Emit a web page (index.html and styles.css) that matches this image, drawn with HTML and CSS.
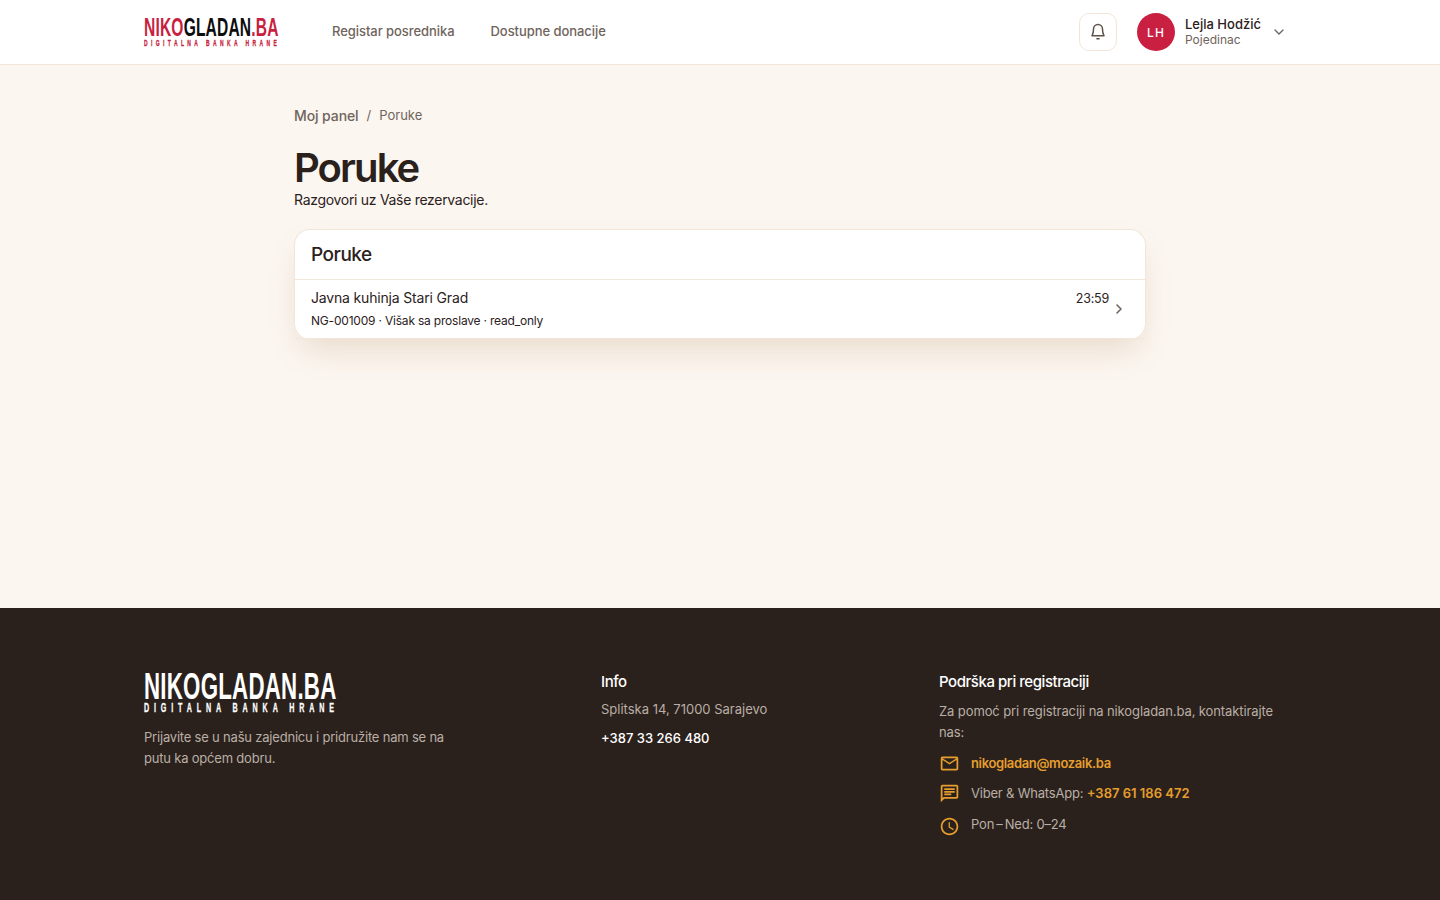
FILE: index.html
```html
<!DOCTYPE html>
<html lang="bs">
<head>
    <meta charset="UTF-8">
    <meta name="viewport" content="width=device-width, initial-scale=1.0">
    <title>Poruke</title>
    <link rel="stylesheet" href="styles.css">
</head>
<body>
    <header class="topbar">
        <div class="topbar-inner">
            <a class="logo logo-small" href="#">
                <span class="logo-name"><span class="logo-red">NIKO</span><span class="logo-dark">GLADAN</span><span class="logo-red">.BA</span></span>
                <span class="logo-sub logo-red">DIGITALNA BANKA HRANE</span>
            </a>
            <nav class="topnav">
                <a href="#">Registar posrednika</a>
                <a href="#">Dostupne donacije</a>
            </nav>
            <div class="topbar-right">
                <button class="bell-btn">
                    <svg width="18" height="18" viewBox="0 0 24 24" fill="none" stroke="currentColor" stroke-width="2" stroke-linecap="round" stroke-linejoin="round"><path d="M6 8a6 6 0 0 1 12 0c0 7 2 8 2 9H4c0-1 2-2 2-9"/><path d="M10.5 21h3"/></svg>
                </button>
                <div class="user">
                    <span class="avatar">LH</span>
                    <span class="user-text">
                        <span class="user-name">Lejla Hodžić</span>
                        <span class="user-role">Pojedinac</span>
                    </span>
                    <svg class="user-chevron" width="16" height="16" viewBox="0 0 24 24" fill="none" stroke="currentColor" stroke-width="2" stroke-linecap="round" stroke-linejoin="round"><path d="m6 9 6 6 6-6"/></svg>
                </div>
            </div>
        </div>
    </header>

    <main class="page">
        <div class="crumbs">
            <a href="#">Moj panel</a>
            <span class="crumb-sep">/</span>
            <span class="crumb-current">Poruke</span>
        </div>
        <h1 class="page-title">Poruke</h1>
        <p class="page-sub">Razgovori uz Vaše rezervacije.</p>

        <section class="card">
            <h2 class="card-title">Poruke</h2>
            <a class="thread" href="#">
                <div class="thread-main">
                    <div class="thread-name">Javna kuhinja Stari Grad</div>
                    <div class="thread-meta">NG-001009 · Višak sa proslave · read_only</div>
                </div>
                <span class="thread-time">23:59</span>
                <svg class="thread-arrow" width="16" height="16" viewBox="0 0 24 24" fill="none" stroke="currentColor" stroke-width="2.4" stroke-linecap="round" stroke-linejoin="round"><path d="m9 6 6 6-6 6"/></svg>
            </a>
        </section>
    </main>

    <footer class="footer">
        <div class="footer-inner">
            <div class="footer-col">
                <div class="logo logo-big">
                    <span class="logo-name">NIKOGLADAN.BA</span>
                    <span class="logo-sub">DIGITALNA BANKA HRANE</span>
                </div>
                <p class="footer-about">Prijavite se u našu zajednicu i pridružite nam se na putu ka općem dobru.</p>
            </div>
            <div class="footer-col">
                <h3 class="footer-head">Info</h3>
                <p class="footer-line">Splitska 14, 71000 Sarajevo</p>
                <a class="footer-phone" href="#">+387 33 266 480</a>
            </div>
            <div class="footer-col">
                <h3 class="footer-head">Podrška pri registraciji</h3>
                <p class="footer-help">Za pomoć pri registraciji na nikogladan.ba, kontaktirajte nas:</p>
                <div class="contact-row">
                    <svg class="contact-icon" viewBox="0 0 24 24" fill="currentColor"><path d="M20 4H4c-1.1 0-1.99.9-1.99 2L2 18c0 1.1.9 2 2 2h16c1.1 0 2-.9 2-2V6c0-1.1-.9-2-2-2zm0 14H4V8l8 5 8-5v10zm-8-7L4 6h16l-8 5z"/></svg>
                    <a class="contact-link contact-mail" href="#">nikogladan@mozaik.ba</a>
                </div>
                <div class="contact-row">
                    <svg class="contact-icon" viewBox="0 0 24 24" fill="currentColor"><path d="M20 2H4c-1.1 0-1.99.9-1.99 2L2 22l4-4h14c1.1 0 2-.9 2-2V4c0-1.1-.9-2-2-2zm0 14H5.17L4 17.17V4h16v12zM6 12h8v2H6zm0-3h12v2H6zm0-3h12v2H6z"/></svg>
                    <span class="contact-text">Viber &amp; WhatsApp: <a class="contact-link" href="#">+387 61 186 472</a></span>
                </div>
                <div class="contact-row">
                    <svg class="contact-icon" viewBox="0 0 24 24" fill="currentColor"><path d="M11.99 2C6.47 2 2 6.48 2 12s4.47 10 9.99 10C17.52 22 22 17.52 22 12S17.52 2 11.99 2zM12 20c-4.42 0-8-3.58-8-8s3.58-8 8-8 8 3.58 8 8-3.58 8-8 8zm.5-13H11v6l5.25 3.15.75-1.23-4.5-2.67z"/></svg>
                    <span class="contact-text">Pon&thinsp;–&thinsp;Ned: 0–24</span>
                </div>
            </div>
        </div>
    </footer>
</body>
</html>
```

FILE: styles.css
```css
* {
    box-sizing: border-box;
}

body {
    margin: 0;
    min-height: 100vh;
    display: flex;
    flex-direction: column;
    font-family: "Inter", "Liberation Sans", sans-serif;
    font-size: 14px;
    background-color: #fbf6f0;
    color: #2b211c;
}

a {
    color: inherit;
    text-decoration: none;
}

/* Header */
.topbar {
    background: #fff;
    border-bottom: 1px solid #f1e6d9;
}

.topbar-inner {
    width: 1152px;
    height: 64px;
    margin: 0 auto;
    display: flex;
    align-items: center;
}

/* no condensed font installed, so squeeze the wordmark */
.logo {
    display: flex;
    flex-direction: column;
    flex-shrink: 0;
    font-family: "Liberation Sans", sans-serif;
    font-weight: 700;
    transform: scaleX(0.6);
    transform-origin: left center;
}

.logo-small {
    width: 135px;
    font-size: 26px;
}

.logo-big {
    width: 193px;
    font-size: 37.2px;
    color: #fff;
}

.logo-name {
    line-height: 0.78em;
    white-space: nowrap;
    letter-spacing: 0.01em;
}

.logo-sub {
    font-size: 0.32em;
    line-height: 1;
    margin-top: 0.2em;
    letter-spacing: 0.68em;
    white-space: nowrap;
    -webkit-text-stroke: 0.3px currentColor;
}

.logo-red {
    color: #c91f41;
}

.logo-dark {
    color: #0d0d0d;
}

.topnav {
    display: flex;
    gap: 36px;
    margin: 0 0 2px 53px;
    font-size: 13px;
    font-weight: 500;
    letter-spacing: -0.06px;
    color: #6f645c;
}

.topbar-right {
    margin-left: auto;
    display: flex;
    align-items: center;
    gap: 20px;
    padding-right: 9px;
}

.bell-btn {
    width: 38px;
    height: 38px;
    display: flex;
    align-items: center;
    justify-content: center;
    padding: 0;
    background: #fff;
    color: #5e534b;
    border: 1px solid #f1e6d9;
    border-radius: 10px;
}

.user {
    display: flex;
    align-items: center;
}

.avatar {
    width: 38px;
    height: 38px;
    border-radius: 50%;
    display: flex;
    align-items: center;
    justify-content: center;
    background: #c91f41;
    color: #fff;
    font-size: 12px;
    font-weight: 500;
    letter-spacing: 0.1em;
}

.user-text {
    display: flex;
    flex-direction: column;
    margin: 0 0 2px 10px;
}

.user-name {
    font-size: 13px;
    font-weight: 500;
    line-height: 16px;
}

.user-role {
    font-size: 12px;
    line-height: 15px;
    color: #6f645c;
}

.user-chevron {
    margin-left: 10px;
    color: #6f645c;
}

/* Main */
.page {
    flex: 1;
    width: 852px;
    margin: 0 auto;
    padding-top: 41px;
}

.crumbs {
    display: flex;
    align-items: center;
    height: 18px;
    font-size: 13px;
    color: #6f645c;
}

.crumbs a {
    font-size: 14px;
    font-weight: 500;
    letter-spacing: -0.1px;
}

.crumb-sep {
    margin: 0 8px;
}

.page-title {
    margin: 22px 0 0;
    font-size: 40px;
    line-height: 44px;
    font-weight: 600;
    letter-spacing: -1.9px;
}

.page-sub {
    margin: 0;
    font-size: 14px;
    line-height: 20px;
    letter-spacing: -0.3px;
}

.card {
    margin-top: 19px;
    background: #fff;
    border: 1px solid #f1e6d9;
    border-bottom: 0;
    border-radius: 16px;
    box-shadow: 0 16px 32px -8px rgba(170, 110, 60, 0.22);
}

.card-title {
    margin: 0;
    height: 50px;
    padding: 0 16px;
    display: flex;
    align-items: center;
    font-size: 19px;
    font-weight: 500;
    letter-spacing: -0.5px;
    border-bottom: 1px solid #f1e6d9;
}

.thread {
    display: flex;
    align-items: flex-start;
    height: 59px;
    padding: 9px 16px 0;
    border-bottom: 1px solid #f1e6d9;
}

.thread-main {
    flex: 1;
}

.thread-name {
    font-size: 14px;
    line-height: 18px;
    letter-spacing: -0.17px;
}

.thread-meta {
    margin-top: 6px;
    font-size: 12px;
    line-height: 16px;
    letter-spacing: -0.2px;
}

.thread-time {
    font-size: 12.5px;
    line-height: 20px;
    letter-spacing: -0.2px;
}

.thread-arrow {
    margin: 12px 2px 0 2px;
    color: #6f645c;
}

/* Footer */
.footer {
    height: 292px;
    background: #2b211c;
    color: #b9afa6;
    font-size: 13px;
}

.footer-inner {
    width: 1152px;
    margin: 0 auto;
    padding-top: 64px;
    display: grid;
    grid-template-columns: 457px 338px 1fr;
}

.footer-about {
    margin: 12px 0 0;
    max-width: 320px;
    line-height: 21px;
    letter-spacing: -0.2px;
}

.footer-head {
    margin: 0;
    font-size: 15px;
    line-height: 20px;
    font-weight: 500;
    letter-spacing: -0.45px;
    color: #fff;
}

.footer-line {
    margin: 7px 0 0;
    line-height: 20px;
}

.footer-phone {
    display: block;
    margin-top: 9px;
    line-height: 20px;
    font-weight: 500;
    color: #fff;
}

.footer-help {
    margin: 9px 0 9px;
    max-width: 346px;
    line-height: 21px;
    letter-spacing: -0.1px;
}

.contact-row {
    display: flex;
    align-items: center;
    gap: 11px;
    margin-top: 8px;
    height: 22px;
}

.contact-row:last-child {
    margin-top: 9px;
}

.contact-icon {
    flex-shrink: 0;
    width: 21px;
    height: 21px;
    margin-top: 1px;
    color: #e59e2e;
}

.contact-row:last-child .contact-icon {
    margin-top: 4px;
}

.contact-text {
    letter-spacing: -0.2px;
}

.contact-link {
    font-weight: 600;
    letter-spacing: 0;
    color: #e59e2e;
}

.contact-mail {
    letter-spacing: -0.35px;
}
```
